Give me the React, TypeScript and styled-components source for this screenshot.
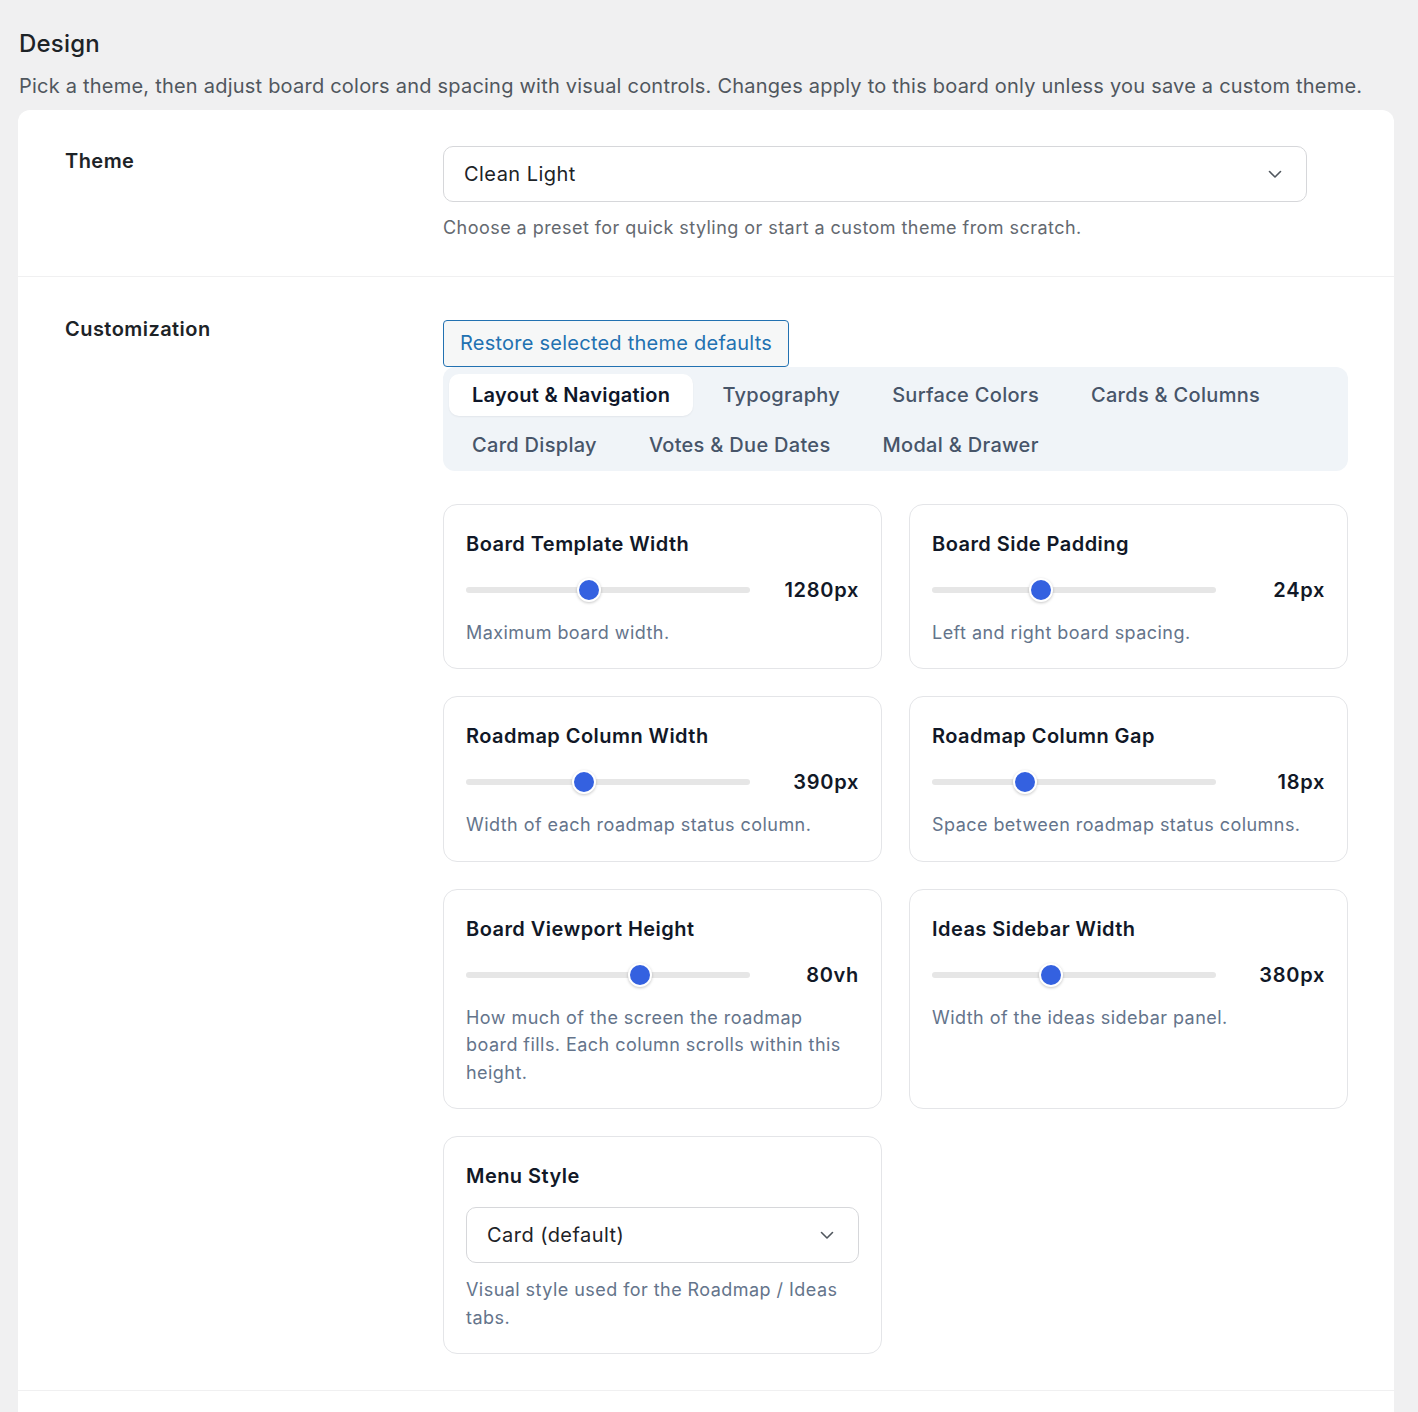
import styled, { createGlobalStyle } from 'styled-components'

const GlobalStyle = createGlobalStyle`
  body {
    margin: 0;
    background: #f0f0f1;
    font-family: Inter, "Noto Sans", "Liberation Sans", sans-serif;
    letter-spacing: 0.45px;
    -webkit-font-smoothing: antialiased;
  }
  * { box-sizing: border-box; }
`

const Page = styled.div`
  padding: 27px 24px 0 18px;
`

const Heading = styled.h1`
  margin: 0 0 0 1px;
  font-size: 24px;
  line-height: 34px;
  font-weight: 500;
  color: #1d2327;
  letter-spacing: 0.2px;
`

const Intro = styled.p`
  margin: 11px 0 10px 1px;
  font-size: 20px;
  line-height: 28px;
  color: #50575e;
  letter-spacing: 0.22px;
`

const Panel = styled.div`
  background: #fff;
  border-radius: 12px 12px 0 0;
`

const Section = styled.section<{ $top: number; $bottom: number }>`
  display: grid;
  grid-template-columns: 378px 1fr;
  padding: ${p => p.$top}px 46px ${p => p.$bottom}px 47px;
  border-bottom: 1px solid #f0f0f1;
`

const Label = styled.div<{ $offset?: number }>`
  padding-top: ${p => p.$offset || 0}px;
  font-size: 20px;
  line-height: 28px;
  font-weight: 600;
  color: #1d2327;
`

const Field = styled.div<{ $offset?: number }>`
  padding-top: ${p => p.$offset || 0}px;
  min-width: 0;
`

const SelectBox = styled.div<{ $max?: number; $gap?: number }>`
  display: flex;
  align-items: center;
  justify-content: space-between;
  height: 56px;
  max-width: ${p => (p.$max ? `${p.$max}px` : 'none')};
  margin-top: ${p => p.$gap || 0}px;
  padding: 0 24px 0 20px;
  border: 1px solid #d6d7da;
  border-radius: 10px;
  background: #fff;
  font-size: 20px;
  color: #1d2327;
`

const Help = styled.p<{ $muted?: boolean }>`
  margin: 12px 0 0;
  font-size: 18px;
  line-height: 27.5px;
  color: ${p => (p.$muted ? '#646970' : '#64748b')};
`

const RestoreButton = styled.button`
  display: inline-flex;
  align-items: center;
  height: 47px;
  padding: 0 16px;
  border: 1px solid #2271b1;
  border-radius: 4px;
  background: #f6f7f7;
  color: #2271b1;
  font-family: inherit;
  font-size: 20px;
  letter-spacing: 0.24px;
`

const TabList = styled.div`
  display: flex;
  flex-wrap: wrap;
  gap: 8px 6px;
  padding: 7px 6px 5px;
  background: #f0f4f8;
  border-radius: 12px;
`

const Tab = styled.div<{ $active?: boolean }>`
  display: flex;
  align-items: center;
  height: 42px;
  padding: 0 23px;
  border-radius: 10px;
  font-size: 20px;
  letter-spacing: 0.3px;
  font-weight: ${p => (p.$active ? 600 : 500)};
  color: ${p => (p.$active ? '#0f172a' : '#475569')};
  background: ${p => (p.$active ? '#fff' : 'transparent')};
  box-shadow: ${p => (p.$active ? '0 1px 2px rgba(15,23,42,0.06)' : 'none')};
`

const CardGrid = styled.div`
  display: grid;
  grid-template-columns: 1fr 1fr;
  gap: 27px 27px;
  margin-top: 33px;
`

const Card = styled.div`
  padding: 25px 22px 22px 22px;
  border: 1px solid #e4e5e8;
  border-radius: 14px;
`

const CardTitle = styled.div`
  font-size: 20px;
  line-height: 28px;
  font-weight: 600;
  color: #111827;
`

const SliderRow = styled.div`
  display: grid;
  grid-template-columns: 1fr 89px;
  column-gap: 20px;
  align-items: center;
  height: 28px;
  margin-top: 18px;
`

const Track = styled.div`
  position: relative;
  height: 6px;
  border-radius: 3px;
  background: #e6e6e6;
`

const Thumb = styled.span`
  position: absolute;
  top: 50%;
  width: 24px;
  height: 24px;
  margin: -12px 0 0 -12px;
  border-radius: 50%;
  background: #3461e0;
  border: 2px solid #fff;
  box-shadow: 0 1px 3px rgba(0, 0, 0, 0.22);
`

const Value = styled.div`
  text-align: right;
  font-size: 20px;
  font-weight: 600;
  color: #111827;
  letter-spacing: 0.7px;
`

const CardHelp = styled(Help)<{ $gap?: number }>`
  margin-top: ${p => p.$gap || 15}px;
`

const Spacer = styled.div`
  height: 40px;
`

const Chevron = () => (
  <svg width="14" height="9" viewBox="0 0 14 9" fill="none">
    <path d="M1.5 1.5L7 7l5.5-5.5" stroke="#50575e" strokeWidth="1.6" strokeLinecap="round" strokeLinejoin="round" />
  </svg>
)

const tabs = [
  'Layout & Navigation',
  'Typography',
  'Surface Colors',
  'Cards & Columns',
  'Card Display',
  'Votes & Due Dates',
  'Modal & Drawer',
]

const sliders = [
  { title: 'Board Template Width', value: '1280px', pos: 0.433, help: 'Maximum board width.' },
  { title: 'Board Side Padding', value: '24px', pos: 0.384, help: 'Left and right board spacing.' },
  { title: 'Roadmap Column Width', value: '390px', pos: 0.415, help: 'Width of each roadmap status column.' },
  { title: 'Roadmap Column Gap', value: '18px', pos: 0.327, help: 'Space between roadmap status columns.' },
  {
    title: 'Board Viewport Height',
    value: '80vh',
    pos: 0.613,
    help: 'How much of the screen the roadmap board fills. Each column scrolls within this height.',
  },
  { title: 'Ideas Sidebar Width', value: '380px', pos: 0.419, help: 'Width of the ideas sidebar panel.' },
]

const App = () => {
  return (
    <Page>
      <GlobalStyle />
      <Heading>Design</Heading>
      <Intro>
        Pick a theme, then adjust board colors and spacing with visual controls. Changes apply to this board only
        unless you save a custom theme.
      </Intro>
      <Panel>
        <Section $top={36} $bottom={34}>
          <Label $offset={1}>Theme</Label>
          <Field>
            <SelectBox $max={864}>
              <span>Clean Light</span>
              <Chevron />
            </SelectBox>
            <Help $muted>Choose a preset for quick styling or start a custom theme from scratch.</Help>
          </Field>
        </Section>
        <Section $top={38} $bottom={36}>
          <Label>Customization</Label>
          <Field $offset={5}>
            <RestoreButton>Restore selected theme defaults</RestoreButton>
            <TabList>
              {tabs.map((t, i) => (
                <Tab key={t} $active={i === 0}>
                  {t}
                </Tab>
              ))}
            </TabList>
            <CardGrid>
              {sliders.map(s => (
                <Card key={s.title}>
                  <CardTitle>{s.title}</CardTitle>
                  <SliderRow>
                    <Track>
                      <Thumb style={{ left: `${s.pos * 100}%` }} />
                    </Track>
                    <Value>{s.value}</Value>
                  </SliderRow>
                  <CardHelp>{s.help}</CardHelp>
                </Card>
              ))}
              <Card>
                <CardTitle>Menu Style</CardTitle>
                <SelectBox $gap={17}>
                  <span>Card (default)</span>
                  <Chevron />
                </SelectBox>
                <CardHelp $gap={13}>Visual style used for the Roadmap / Ideas tabs.</CardHelp>
              </Card>
            </CardGrid>
          </Field>
        </Section>
        <Spacer />
      </Panel>
    </Page>
  )
}

export default App
